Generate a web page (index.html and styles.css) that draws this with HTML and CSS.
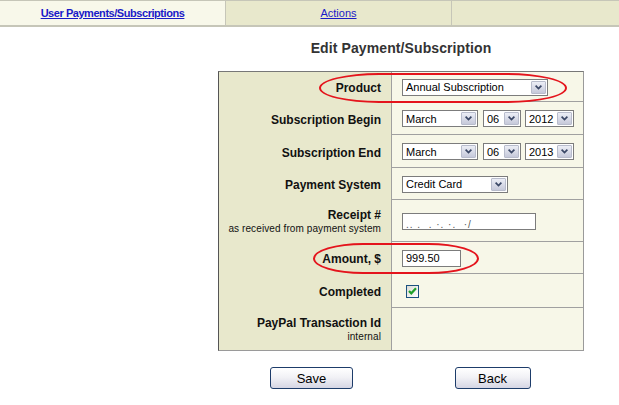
FILE: index.html
```html
<!DOCTYPE html>
<html>
<head>
<meta charset="utf-8">
<title>Edit Payment/Subscription</title>
<link rel="stylesheet" href="styles.css">
</head>
<body>
<div class="tabs">
  <div class="tab tab-active"><a href="#">User Payments/Subscriptions</a></div>
  <div class="tab"><a href="#">Actions</a></div>
  <div class="tab tab-fill"></div>
</div>
<div class="content">
  <h1 class="title">Edit Payment/Subscription</h1>
  <div class="form">
    <div class="lbl">Product</div>
    <div class="val">
      <span class="select w-product"><span class="sel-text">Annual Subscription</span><span class="sel-btn"><svg width="7" height="5" viewBox="0 0 7 5"><path d="M0.6 0.6 L3.5 3.6 L6.4 0.6" stroke="#3a4766" stroke-width="1.7" fill="none"/></svg></span></span>
    </div>

    <div class="lbl">Subscription Begin</div>
    <div class="val row-gap">
      <span class="select w-month"><span class="sel-text">March</span><span class="sel-btn"><svg width="7" height="5" viewBox="0 0 7 5"><path d="M0.6 0.6 L3.5 3.6 L6.4 0.6" stroke="#3a4766" stroke-width="1.7" fill="none"/></svg></span></span>
      <span class="select w-day"><span class="sel-text">06</span><span class="sel-btn"><svg width="7" height="5" viewBox="0 0 7 5"><path d="M0.6 0.6 L3.5 3.6 L6.4 0.6" stroke="#3a4766" stroke-width="1.7" fill="none"/></svg></span></span>
      <span class="select w-year"><span class="sel-text">2012</span><span class="sel-btn"><svg width="7" height="5" viewBox="0 0 7 5"><path d="M0.6 0.6 L3.5 3.6 L6.4 0.6" stroke="#3a4766" stroke-width="1.7" fill="none"/></svg></span></span>
    </div>

    <div class="lbl">Subscription End</div>
    <div class="val row-gap">
      <span class="select w-month"><span class="sel-text">March</span><span class="sel-btn"><svg width="7" height="5" viewBox="0 0 7 5"><path d="M0.6 0.6 L3.5 3.6 L6.4 0.6" stroke="#3a4766" stroke-width="1.7" fill="none"/></svg></span></span>
      <span class="select w-day"><span class="sel-text">06</span><span class="sel-btn"><svg width="7" height="5" viewBox="0 0 7 5"><path d="M0.6 0.6 L3.5 3.6 L6.4 0.6" stroke="#3a4766" stroke-width="1.7" fill="none"/></svg></span></span>
      <span class="select w-year"><span class="sel-text">2013</span><span class="sel-btn"><svg width="7" height="5" viewBox="0 0 7 5"><path d="M0.6 0.6 L3.5 3.6 L6.4 0.6" stroke="#3a4766" stroke-width="1.7" fill="none"/></svg></span></span>
    </div>

    <div class="lbl">Payment System</div>
    <div class="val">
      <span class="select w-payment"><span class="sel-text">Credit Card</span><span class="sel-btn"><svg width="7" height="5" viewBox="0 0 7 5"><path d="M0.6 0.6 L3.5 3.6 L6.4 0.6" stroke="#3a4766" stroke-width="1.7" fill="none"/></svg></span></span>
    </div>

    <div class="lbl lbl-two"><span>Receipt #</span><span class="sub">as received from payment system</span></div>
    <div class="val">
      <span class="input w-receipt"><span class="blurred">.. .&nbsp; . ·. ·.&nbsp; ·/</span></span>
    </div>

    <div class="lbl">Amount, $</div>
    <div class="val">
      <span class="input w-amount">999.50</span>
    </div>

    <div class="lbl">Completed</div>
    <div class="val">
      <span class="checkbox"><svg width="9" height="8" viewBox="0 0 9 8"><path d="M1 4 L3.3 6.3 L8 1.2" stroke="#1fa12a" stroke-width="2.2" fill="none"/></svg></span>
    </div>

    <div class="lbl lbl-two lbl-last"><span>PayPal Transaction Id</span><span class="sub">internal</span></div>
    <div class="val val-last"></div>
  </div>
  <div class="buttons">
    <div class="half"><button class="btn btn-save">Save</button></div>
    <div class="half"><button class="btn btn-back">Back</button></div>
  </div>
</div>
<div class="mark mark-product"></div>
<div class="mark mark-amount"></div>
</body>
</html>
```
FILE: styles.css
```css
body {
  margin: 0;
  background: #ffffff;
  font-family: "Liberation Sans", Arial, sans-serif;
  color: #000;
}

.tabs {
  display: flex;
  height: 27px;
  box-sizing: border-box;
  border-top: 1px solid #c6c6b8;
  border-bottom: 2px solid #c6c6b8;
}

.tab {
  box-sizing: border-box;
  width: 226px;
  background: #e8e8cc;
  text-align: center;
  font-size: 11px;
  line-height: 24px;
  border-left: 1px solid #c6c6b8;
}

.tab-active {
  width: 225px;
  border-left: none;
  background: #f8f8ea;
  font-weight: bold;
  letter-spacing: -0.45px;
}

.tab-fill {
  flex: 1;
}

.tab a {
  color: #1a1ac8;
  text-decoration: underline;
}

.content {
  margin-left: 218px;
  width: 366px;
}

.title {
  margin: 13px 0 15px;
  font-size: 14px;
  line-height: 16px;
  font-weight: bold;
  color: #333;
  text-align: center;
  letter-spacing: 0.1px;
}

.form {
  display: grid;
  grid-template-columns: 173px 191px;
  grid-template-rows: 30px 33px 33px 32px 42px 32px 34px 42px;
  border: 1px solid #9a9a9a;
  border-left-color: #555;
  border-top-color: #777;
}

.lbl {
  box-sizing: border-box;
  background: #e8e8cc;
  border-right: 1px solid #a0a0a0;
  display: flex;
  align-items: center;
  justify-content: flex-end;
  padding: 2px 10px 0 0;
  font-size: 12px;
  font-weight: bold;
  color: #111;
}

.lbl-two {
  flex-direction: column;
  align-items: flex-end;
  justify-content: center;
  line-height: 14px;
}

.lbl-two .sub {
  font-size: 10px;
  font-weight: normal;
  letter-spacing: 0.1px;
}

.val {
  box-sizing: border-box;
  background: #f7f7e8;
  border-bottom: 1px solid #a0a0a0;
  display: flex;
  align-items: center;
  padding: 1px 0 0 10px;
}

.val-last {
  border-bottom: none;
}

.row-gap {
  gap: 5px;
}

.select {
  box-sizing: border-box;
  display: inline-flex;
  align-items: center;
  height: 17px;
  border: 1px solid #7c7c7c;
  background: #fff;
  font-size: 11px;
  color: #000;
}

.sel-text {
  flex: 1;
  padding-left: 3px;
  white-space: nowrap;
  overflow: hidden;
}

.sel-btn {
  box-sizing: border-box;
  width: 15px;
  height: 13px;
  margin-right: 1px;
  display: flex;
  align-items: center;
  justify-content: center;
  border: 1px solid #b8bccc;
  border-radius: 1px;
  background: linear-gradient(#eceef6, #c6c9da);
}

.w-product { width: 146px; }
.w-month { width: 76px; }
.w-day { width: 38px; }
.w-year { width: 49px; margin-left: -1px; }
.w-payment { width: 106px; }

.input {
  box-sizing: border-box;
  display: inline-block;
  height: 17px;
  border: 1px solid #7c7c7c;
  background: #fff;
  font-size: 11px;
  line-height: 15px;
  padding-left: 3px;
}

.w-receipt { width: 134px; overflow: hidden; }
.w-amount { width: 59px; }

.blurred {
  color: #555;
  position: relative;
  top: 3px;
  font-size: 10px;
  letter-spacing: 1px;
}

.checkbox {
  box-sizing: border-box;
  width: 13px;
  height: 13px;
  margin-left: 4px;
  border: 1px solid #1c5180;
  background: linear-gradient(135deg, #dcdcd6, #ffffff);
  display: flex;
  align-items: center;
  justify-content: center;
}

.buttons {
  display: flex;
  margin-top: 16px;
}

.half {
  width: 183px;
  display: flex;
  justify-content: center;
}

.btn {
  box-sizing: border-box;
  height: 22px;
  border: 1px solid #1d3c6a;
  border-radius: 3px;
  background: linear-gradient(#ffffff 0%, #f2f2f6 45%, #d6d6e4 100%);
  font-family: "Liberation Sans", Arial, sans-serif;
  font-size: 13px;
  color: #000;
  padding: 0;
}

.btn-save { width: 83px; margin-left: 4px; }
.btn-back { width: 76px; }

.mark {
  position: absolute;
  box-sizing: border-box;
  border: 2px solid #e4141c;
}

.mark-product {
  left: 319px;
  top: 73px;
  width: 248px;
  height: 30px;
  border-radius: 60px / 50%;
}

.mark-amount {
  left: 313px;
  top: 243px;
  width: 166px;
  height: 31px;
  border-radius: 50px / 50%;
}
```
